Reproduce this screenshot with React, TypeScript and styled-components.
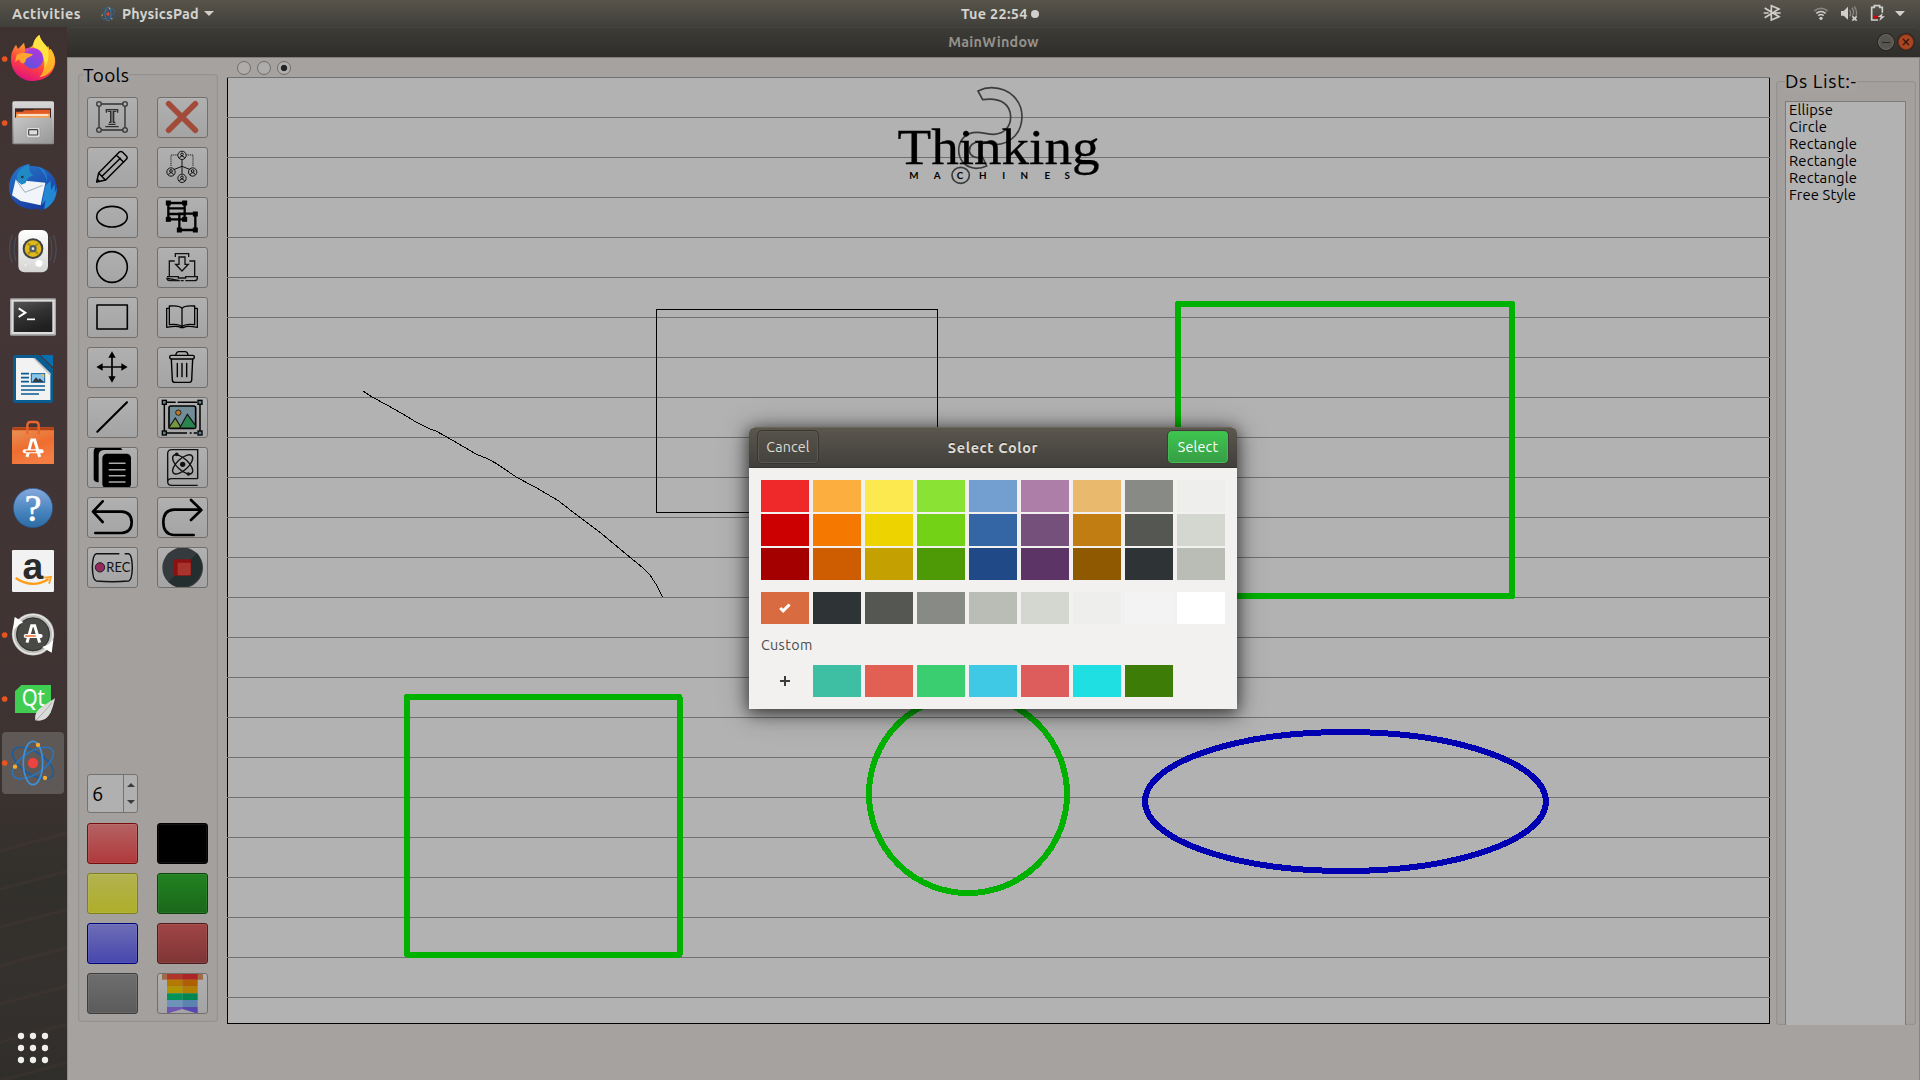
import React from "react";
import styled, { createGlobalStyle, css } from "styled-components";

const uiFont = `Ubuntu, "Noto Sans", "Open Sans", sans-serif`;

const GlobalStyle = createGlobalStyle`
  * { box-sizing: border-box; }
  html, body { margin: 0; padding: 0; overflow: hidden; }
  body { font-family: ${uiFont}; background: #a6a29f; }
  svg { display: block; }
  button { font: inherit; padding: 0; margin: 0; }
`;

/* ---------- desktop shell ---------- */

const Desktop = styled.div`
  position: relative;
  width: 1920px;
  height: 1080px;
  display: flex;
  flex-direction: column;
  overflow: hidden;
`;

const TopBar = styled.header`
  height: 27px;
  flex: none;
  display: grid;
  grid-template-columns: 961px auto 1fr;
  align-items: center;
  color: #d4d3cf;
  background: linear-gradient(#58544b, #403f3a);
`;

const TopLeft = styled.div`
  display: flex;
  align-items: center;
  padding-left: 12px;
`;

const BarText = styled.span<{ $width?: number; $spacing?: number }>`
  width: ${(p) => (p.$width ? `${p.$width}px` : "auto")};
  font-size: 14.4px;
  font-weight: 600;
  line-height: 26px;
  white-space: nowrap;
  letter-spacing: ${(p) => p.$spacing ?? 0.2}px;
`;

const AppMenu = styled.div`
  display: flex;
  align-items: center;
  margin-left: 20px;
  gap: 6px;
`;

const Caret = styled.i`
  border: 5px solid transparent;
  border-top-color: #d0cfcb;
  border-bottom: 0;
`;

const Clock = styled.div`
  display: flex;
  align-items: center;
`;

const ClockDot = styled.i`
  width: 8px;
  height: 8px;
  border-radius: 50%;
  background: #d0cfcb;
`;

const Tray = styled.div`
  display: flex;
  justify-content: flex-end;
  padding-right: 14px;
`;

const TrayIcon = styled.svg<{ $before: number }>`
  margin-left: ${(p) => p.$before}px;
`;

const Workspace = styled.div`
  flex: 1;
  display: flex;
  min-height: 0;
`;

/* ---------- dock ---------- */

const DockBar = styled.nav`
  width: 67px;
  flex: none;
  display: flex;
  flex-direction: column;
  background:
    repeating-linear-gradient(165deg, transparent 0 21px, rgba(120, 70, 60, 0.1) 22px 24px, transparent 25px 37px) 0 800px / 67px 253px no-repeat,
    linear-gradient(#3e3231 0, #443636 250px, #413434 560px, #3c3331 740px, #32302c 860px, #35312e 950px, #302e2b 100%);
`;

const DockCell = styled.div<{ $active?: boolean; $last?: boolean }>`
  width: 67px;
  height: 64px;
  flex: none;
  ${(p) => p.$last && css`margin-top: auto;`}
  ${(p) =>
    p.$active &&
    css`
      width: 62px;
      height: 62px;
      margin: 1px 2px 1px;
      border-radius: 4px;
      background: #5e5856;
      svg { margin: -1px 0 0 -2px; }
    `}
`;

/* ---------- main window ---------- */

const Window = styled.main`
  flex: 1;
  display: flex;
  flex-direction: column;
  background: #3f3e39;
`;

const TitleBar = styled.div`
  height: 30px;
  flex: none;
  display: grid;
  grid-template-columns: 1fr auto 1fr;
  align-items: center;
  padding-bottom: 2px;
  border-radius: 6px 6px 0 0;
  border-top: 1px solid #45443e;
  background: linear-gradient(#3d3c37, #2e2d29);
  color: #94918a;
`;

const WindowButtons = styled.div`
  display: flex;
  justify-content: flex-end;
  gap: 4px;
  padding: 1px 6px 0 0;
`;

const RoundButton = styled.button<{ $close?: boolean }>`
  width: 16px;
  height: 16px;
  border-radius: 50%;
  display: grid;
  place-items: center;
  border: 1px solid ${(p) => (p.$close ? "#7c3317" : "#6d6a63")};
  background: ${(p) => (p.$close ? "#aa4523" : "#57554f")};
  box-shadow: 0 0 0 1px #262521;
`;

const Client = styled.div`
  flex: 1;
  display: flex;
  align-items: flex-start;
  border: 1px solid #878380;
  border-top-color: #827e7b;
  border-bottom: 0;
  border-left-color: #8f8b88;
  background: #a6a29f;
`;

const Group = styled.section<{ $w: number; $h: number; $top: number; $left: number }>`
  width: ${(p) => p.$w}px;
  height: ${(p) => p.$h}px;
  margin: ${(p) => p.$top}px 0 0 ${(p) => p.$left}px;
  flex: none;
  display: flex;
  flex-direction: column;
  border: 1px solid #949290;
  border-radius: 3px;
  box-shadow: inset 0 0 0 1px #a09d9a;
  background: #a4a09d;
`;

const GroupTitle = styled.h2<{ $left: number; $lift: number; $spacing: number }>`
  align-self: flex-start;
  height: 24px;
  margin: -${(p) => p.$lift}px 0 ${(p) => p.$lift - 12}px ${(p) => p.$left}px;
  font-size: 19px;
  font-weight: 400;
  line-height: 24px;
  letter-spacing: ${(p) => p.$spacing}px;
  white-space: nowrap;
  color: #000;
  background: #a6a29f;
`;

const ToolGrid = styled.div<{ $top: number }>`
  display: grid;
  grid-template-columns: 51px 51px;
  grid-auto-rows: 41px;
  gap: 9px 19px;
  margin: ${(p) => p.$top}px 0 0 8px;
`;

const ToolButton = styled.button<{ $from?: string; $to?: string; $edge?: string }>`
  overflow: hidden;
  border: 1px solid ${(p) => p.$edge ?? "#716e6c"};
  border-radius: 3px;
  background: linear-gradient(${(p) => p.$from ?? "#b0b0b0"}, ${(p) => p.$to ?? "#a5a4a4"});
  box-shadow: ${(p) => (p.$from ? "inset 0 0 0 1px rgba(255,255,255,.07)" : "inset 0 1px #b4b4b4")};
  svg { margin: -1px; }
`;

const Spin = styled.div`
  width: 51px;
  height: 39px;
  flex: none;
  display: flex;
  margin: 186px 0 0 8px;
  border: 1px solid #757371;
  border-radius: 3px;
  background: #b0b0b0;
`;

const SpinValue = styled.span`
  flex: 1;
  padding-left: 4px;
  font-size: 20px;
  line-height: 37px;
  color: #000;
`;

const SpinArrows = styled.div`
  width: 14px;
  display: flex;
  flex-direction: column;
  align-items: center;
  justify-content: center;
  gap: 13px;
  border-left: 1px solid #757371;
`;

const SpinArrow = styled.i<{ $down?: boolean }>`
  border: 4px solid transparent;
  ${(p) =>
    p.$down
      ? css`border-top-color: #3c3b3a; border-bottom: 0;`
      : css`border-bottom-color: #3c3b3a; border-top: 0;`}
`;

const CanvasColumn = styled.div`
  width: 1543px;
  flex: none;
  margin-left: 9px;
`;

const Radios = styled.div`
  height: 19px;
  display: flex;
  align-items: center;
  gap: 6px;
  padding: 1px 0 0 10px;
`;

const Radio = styled.i<{ $on?: boolean }>`
  width: 14px;
  height: 14px;
  border-radius: 50%;
  border: 1px solid #6f6d6b;
  background: ${(p) => (p.$on ? "radial-gradient(circle, #242424 0 2.8px, #b1b0b0 3.6px)" : "#aeadac")};
`;

const ObjectList = styled.ul`
  flex: 1;
  width: 121px;
  margin: 7px 0 -1px 8px;
  padding: 0 0 0 3px;
  list-style: none;
  border: 1px solid #7d7a78;
  border-bottom: 0;
  background: #b2b2b2;
`;

const ObjectItem = styled.li`
  height: 17px;
  font-size: 14.8px;
  line-height: 15px;
  letter-spacing: 0.15px;
  color: #000;
`;

/* ---------- colour dialog ---------- */

const Dialog = styled.section`
  position: absolute;
  left: 749px;
  top: 427px;
  width: 488px;
  height: 282px;
  display: flex;
  flex-direction: column;
  border-radius: 6px 6px 0 0;
  background: #f2f1f0;
  box-shadow: 0 3px 16px 1px rgba(0, 0, 0, 0.62), 0 3px 32px rgba(0, 0, 0, 0.28);
`;

const DialogHeader = styled.div`
  height: 41px;
  flex: none;
  display: flex;
  align-items: center;
  justify-content: space-between;
  padding: 0 8px 1px;
  border-radius: 6px 6px 0 0;
  border-top: 1px solid #69655b;
  border-bottom: 1px solid #37352f;
  background: linear-gradient(#5b574e, #413f3b);
  color: #dfdbd2;
`;

const DialogTitle = styled.h1`
  margin: 0;
  font-size: 14.5px;
  font-weight: 600;
  letter-spacing: 0.6px;
  text-shadow: 0 -1px #2c2b27;
`;

const DialogButton = styled.button<{ $primary?: boolean }>`
  width: 62px;
  height: 34px;
  padding-top: 1px;
  font-size: 14.3px;
  line-height: 31px;
  letter-spacing: ${(p) => (p.$primary ? 0.2 : 0.15)}px;
  border-radius: 5px;
  color: ${(p) => (p.$primary ? "#fff" : "#dfdbd2")};
  border: 1px solid ${(p) => (p.$primary ? "#403c38" : "#38362f")};
  background: ${(p) => (p.$primary ? "linear-gradient(#3ec650, #379d45)" : "linear-gradient(#55524a, #45433e)")};
  box-shadow: inset 0 0 0 1px ${(p) => (p.$primary ? "#42bb51" : "#5a574f")};
`;

const Palette = styled.div<{ $top: number }>`
  display: grid;
  grid-template-columns: repeat(9, 48px);
  grid-auto-rows: 32px;
  gap: 2px 4px;
  margin: ${(p) => p.$top}px 12px 0;
`;

const Swatch = styled.div<{ $color: string }>`
  display: grid;
  place-items: center;
  background: ${(p) => p.$color};
`;

const CustomLabel = styled.div`
  height: 20px;
  margin: 11px 0 0 12px;
  font-size: 14.3px;
  line-height: 20px;
  letter-spacing: 0.4px;
  color: #4c4c4c;
`;

/* ---------- tool icons, drawn on a 153 x 123 grid ---------- */

const ink = { fill: "none", stroke: "#000", strokeWidth: 4.8, strokeLinecap: "round", strokeLinejoin: "round" } as const;

const Person = ({ x, y }: { x: number; y: number }) => (
  <g transform={`translate(${x} ${y})`} fill="none" stroke="#111" strokeWidth="3">
    <circle r="12.5" />
    <circle cy="-3" r="4" />
    <path d="M-7 8Q-6 2 0 2Q6 2 7 8" />
  </g>
);

const toolIcons: React.ReactNode[] = [
  <g fill="none" stroke="#303030" strokeWidth="4">
    <path d="M43 21H108M43 99H108M36 28V92M114 28V92" />
    {[[36, 21], [114, 21], [36, 99], [114, 99]].map(([x, y]) => (
      <rect key={`${x}-${y}`} x={x - 6.5} y={y - 6.5} width="13" height="13" rx="4" />
    ))}
    <path d="M58 47V38H92V47M62 43H71V76H66M88 43H80V76H85M64 82H86M55 89H95" />
    <path d="M75 42V77" strokeWidth="4" stroke="#555" />
  </g>,
  <path d="M35 20L115 100M115 20L35 100" stroke="#a34b3b" strokeWidth="17" strokeLinecap="round" />,
  <g {...ink} strokeWidth={4.4}>
    <path d="M29 105L35 78L97 15Q102 11 107 16L118 27Q123 32 118 37L56 99ZM35 78L55 99M88 24L110 46M45 88L100 34M31 97L37 103" />
  </g>,
  <g>
    <path d="M62 24H42V58M88 24H108V58" stroke="#111" strokeWidth="2.6" strokeDasharray="3.5 2" fill="none" />
    <path d="M75 38V80M75 58L50 68M75 58L100 68" stroke="#111" strokeWidth="3" />
    <Person x={75} y={25} />
    <Person x={42} y={75} />
    <Person x={107} y={75} />
    <Person x={75} y={94} />
  </g>,
  <ellipse {...ink} cx="75" cy="59" rx="46" ry="31" />,
  <g>
    <path d="M34 18H83V67H34ZM67 50H115V99H67ZM34 34H83M34 51H83" fill="none" stroke="#000" strokeWidth="7" />
    {[[34, 18], [83, 18], [34, 67], [83, 67], [115, 51], [67, 99], [115, 99]].map(([x, y]) => (
      <rect key={`${x}-${y}`} x={x - 7.5} y={y - 7.5} width="15" height="15" />
    ))}
  </g>,
  <circle {...ink} cx="75" cy="60" r="46" />,
  <g fill="none" stroke="#111" strokeWidth="4">
    <path d="M55 30V20H95V30M53 42H37V88M97 42H113V88M66 30H84V52H94L75 72L56 52H66ZM30 89H64V93H86V89H121V94Q120 101 113 101H85M68 101H38Q30 101 30 94ZM71 101H80" />
  </g>,
  <rect {...ink} x="30" y="24" width="91" height="72" />,
  <g {...ink} strokeWidth={3.8}>
    <path d="M75 34Q67 24 37 27V83Q67 80 75 90Q83 80 113 83V27Q83 24 75 34V88M37 34H29V91Q62 85 72 92H79Q88 85 121 91V34H114" />
  </g>,
  <g>
    <path d="M35 60H116M75 20V100" stroke="#000" strokeWidth="5" />
    <path d="M28 60L47 49V71ZM122 60L103 49V71ZM75 13L64 32H86ZM75 107L64 88H86Z" />
  </g>,
  <g {...ink} strokeWidth={4.2}>
    <path d="M43 37L46 100Q47 106 54 106H97Q103 106 104 100L107 37M56 25Q58 14 66 14H84Q92 14 93 25M61 49V89M75 49V89M89 49V89" />
    <rect x="38" y="25" width="74" height="11" rx="5" />
  </g>,
  <path d="M31 104L120 16" stroke="#000" strokeWidth="6.5" strokeLinecap="round" />,
  <g>
    <rect x="36" y="27" width="80" height="67" fill="#728d97" stroke="#000" strokeWidth="5" rx="6" />
    <circle cx="64" cy="47" r="8" fill="#bd7926" stroke="#222" strokeWidth="3" />
    <path d="M35 93L55 63L73 93Z" fill="#73983e" stroke="#111" strokeWidth="3.5" />
    <path d="M68 93L91 52L116 86V93Z" fill="#2b844c" stroke="#111" strokeWidth="3.5" />
    <path d="M30 16H56M62 16H120M30 108H90M98 108H104M110 108H120M22 24V104M129 24V104" stroke="#000" strokeWidth="4.5" />
    {[[22, 16], [129, 16], [22, 108], [129, 108]].map(([x, y]) => (
      <rect key={`${x}-${y}`} x={x - 6} y={y - 6} width="12" height="12" fill="#607f8c" stroke="#000" strokeWidth="4" />
    ))}
  </g>,
  <g>
    <path d="M31 106Q20 103 20 95V14Q20 0 34 0H96Q104 3 106 9H50Q35 10 35 24V106Z" />
    <rect x="46" y="20" width="86" height="104" rx="13" />
    <path d="M67 49H114M67 68H114M67 86H114M67 105H114" stroke="#aaa" strokeWidth="4.5" strokeLinecap="round" />
  </g>,
  <g fill="none" stroke="#111" strokeWidth="4.2">
    <path d="M122 85V8H45Q32 8 32 20V104M122 95H44Q32 95 32 105Q33 115 44 115H122M122 85V95" />
    <ellipse cx="77" cy="52" rx="38" ry="17" transform="rotate(43 77 52)" />
    <ellipse cx="77" cy="52" rx="38" ry="17" transform="rotate(-43 77 52)" />
    <g fill="#111" stroke="none">
      <circle cx="77" cy="52" r="8" />
      <circle cx="59" cy="22" r="5.5" />
      <circle cx="94" cy="81" r="5.5" />
    </g>
  </g>,
  <path d="M25 108H104Q134 106 134 76Q134 46 104 44H20M47 13L18 44L47 75" fill="none" stroke="#000" strokeWidth="8" strokeLinecap="round" strokeLinejoin="round" />,
  <path d="M110 114H50Q19 112 19 76Q19 40 50 38H131M102 9L133 39L102 69" fill="none" stroke="#000" strokeWidth="8" strokeLinecap="round" strokeLinejoin="round" />,
  <g>
    <path d="M97 20H28Q17 22 16 61Q17 100 28 102Q75 106 125 102Q135 100 136 61Q135 22 125 20H113" fill="none" stroke="#111" strokeWidth="4.4" />
    <circle cx="39" cy="61" r="14" fill="#922a5e" stroke="#222" strokeWidth="3" />
    <text x="58" y="75" fontSize="41" textLength="72" lengthAdjust="spacingAndGlyphs" fontFamily="Lato, sans-serif" fill="#111">REC</text>
  </g>,
  <g>
    <circle cx="77" cy="62" r="61" fill="#353a3e" />
    <path d="M120 19A61 61 0 0 1 34 105Z" fill="#232e2e" />
    <rect x="51" y="37" width="51" height="49" rx="3" fill="#8d1110" />
    <rect x="62" y="47" width="39" height="38" rx="3" fill="#a7352d" />
  </g>,
];

const colorButtons = [
  ["#b46263", "#b0393b", "#760d0f"],
  ["#000", "#000", "#000"],
  ["#b2b250", "#aeae2a", "#80801a"],
  ["#218221", "#1a681a", "#0c420c"],
  ["#6d6db6", "#4747ae", "#00007a"],
  ["#a04546", "#7f3535", "#4e1c1c"],
  ["#6e6e6e", "#5b5b5b", "#3d3d3d"],
];

const Glyph = ({ children }: { children: React.ReactNode }) => (
  <svg width="51" height="41" viewBox="0 0 153 123">{children}</svg>
);

const RainbowFlag = () => (
  <Glyph>
    <path d="M15 0H138V20H15Z" fill="#9e6b45" />
    {[["#b0362c", "#ad2427", 0, 20], ["#b47a00", "#ae5f00", 20, 21], ["#ad9600", "#b07f00", 41, 20], ["#009259", "#008650", 61, 20], ["#6d93b8", "#5c83b0", 81, 21]].map(
      ([a, b, y, h]) => (
        <g key={y as number}>
          <rect x="30" y={y} width="46" height={h} fill={a as string} />
          <rect x="76" y={y} width="46" height={h} fill={b as string} />
        </g>
      ),
    )}
    <path d="M30 102H76V108L30 122Z" fill="#6f54b2" />
    <path d="M76 102H122V122L76 108Z" fill="#5845b0" />
  </Glyph>
);

/* ---------- dock icons, drawn on a 201 x 192 grid ---------- */

const Atom = ({ cx, cy, s = 1 }: { cx: number; cy: number; s?: number }) => (
  <g transform={`translate(${cx} ${cy}) scale(${s})`} fill="none" strokeWidth="5">
    <ellipse rx="70" ry="33" transform="rotate(33)" stroke="#1d5d9b" />
    <ellipse rx="70" ry="33" transform="rotate(-33)" stroke="#2a74b9" />
    <ellipse rx="29" ry="65" stroke="#3c92dd" />
    <g fill="#fbab2b">
      <circle r="15.5" fill="#eb4340" />
      <circle cx="15" cy="-54" r="6.5" />
      <circle cx="-54" cy="11" r="6.5" />
      <circle cx="36" cy="45" r="6.5" />
    </g>
  </g>
);

const dockItems: { name: string; running?: boolean; art: React.ReactNode }[] = [
  {
    name: "Firefox",
    running: true,
    art: (
      <g>
        <path d="M33 98C32 76 42 62 48 53L54 66L72 47L76 66C88 64 96 60 100 51C102 40 109 31 118 24C122 42 134 50 142 62L144 57L149 70L152 66C162 78 168 97 165 112C160 142 133 162 99 162C62 162 34 134 33 98Z" fill="url(#fx)" />
        <path d="M118 24C122 42 134 50 142 62L144 57L149 70L152 66C164 82 168 103 160 121C152 136 138 148 118 151C137 132 138 92 122 74C108 68 100 62 100 51C102 40 109 31 118 24Z" fill="#ffc226" opacity=".85" />
        <path d="M118 24C122 42 134 50 142 62C150 84 144 108 134 121C136 94 121 69 100 60C100 42 109 31 118 24Z" fill="#fff04d" opacity=".75" />
        <circle cx="99" cy="94" r="31" fill="url(#globe)" />
        <path d="M50 83C64 75 82 78 99 82C93 91 83 90 78 97C76 113 62 114 57 97L45 105Z" fill="#ffa52e" />
        <path d="M74 66Q88 61 102 63Q88 66 83 76Q76 75 74 66Z" fill="#c846c0" />
      </g>
    ),
  },
  {
    name: "Files",
    running: true,
    art: (
      <g>
        <rect x="37" y="31" width="125" height="129" rx="5" fill="url(#steel)" />
        <rect x="45" y="52" width="108" height="32" fill="#3d2421" />
        <path d="M48 62H68L73 58H98L102 56H150V84H48Z" fill="#e35b25" />
        <path d="M48 68H150V84H48Z" fill="#f5a153" />
        <path d="M54 70H145V74H54Z" fill="#fff" />
        <rect x="42" y="80" width="114" height="76" fill="url(#steel2)" />
        <rect x="79" y="109" width="41" height="31" rx="6" fill="#ddd" stroke="#999" strokeWidth="2" />
        <rect x="86" y="116" width="27" height="16" rx="2" fill="#ddd" stroke="#444" strokeWidth="3.5" />
      </g>
    ),
  },
  {
    name: "Thunderbird",
    art: (
      <g>
        <path d="M29 112C21 75 45 33 83 28L91 26L87 33C133 29 171 60 171 101C171 132 152 160 119 167L122 160L104 163C68 164 36 146 29 112Z" fill="url(#tb)" />
        <path d="M112 34C140 44 148 69 135 96L125 151L137 136L132 163C159 150 171 126 170 98L164 113L165 87L153 105L152 77L139 90Q144 57 112 34Z" fill="#2388d2" />
        <path d="M36 121L47 73L58 84L77 77L136 83L122 151L62 138Z" fill="#f1f4f8" />
        <path d="M48 75L75 112L128 91" fill="none" stroke="#8fa0b1" strokeWidth="2.5" />
        <path d="M51 76Q46 46 83 29L89 32Q82 49 100 61Q79 67 77 84L64 89Z" fill="#208ac7" />
        <circle cx="67" cy="66" r="4" fill="#26343d" />
      </g>
    ),
  },
  {
    name: "Rhythmbox",
    art: (
      <g>
        <path d="M37 48Q20 90 37 132M160 48Q177 90 160 132M48 54Q37 90 48 126M150 54Q161 90 150 126" fill="none" stroke="#52687b" strokeWidth="4" opacity=".45" />
        <rect x="55" y="33" width="89" height="127" rx="18" fill="url(#white)" />
        <circle cx="99" cy="89" r="31" fill="#3e4244" />
        <circle cx="99" cy="89" r="25" fill="#e0b919" />
        <path d="M84 73L114 105M114 73L84 105" stroke="#a88f17" strokeWidth="6" />
        <circle cx="99" cy="89" r="11" fill="#555e67" />
        <circle cx="99" cy="89" r="4" fill="#e9e9dc" />
        <circle cx="117" cy="133" r="11" fill="#fff" stroke="#ddd" />
        <circle cx="77" cy="138" r="6" fill="#e8e8e8" stroke="#ccc" />
      </g>
    ),
  },
  {
    name: "Terminal",
    art: (
      <g>
        <rect x="30" y="46" width="138" height="112" rx="4" fill="#a6a6a6" />
        <rect x="34" y="50" width="130" height="103" rx="2" fill="#ddd" />
        <rect x="41" y="56" width="116" height="91" fill="url(#term)" />
        <path d="M56 76L76 89L56 102" fill="none" stroke="#fff" strokeWidth="6" />
        <path d="M81 109H105" stroke="#fff" strokeWidth="5" />
      </g>
    ),
  },
  {
    name: "Writer",
    art: (
      <g>
        <path d="M46 24H118L159 65V162Q159 168 152 168H46Q39 168 39 162V31Q39 24 46 24Z" fill="#0b5c91" />
        <path d="M122 24H155Q159 24 159 28V60Z" fill="#0870b2" />
        <path d="M48 33H104L151 79V159H48Z" fill="#f2f2f2" />
        <path d="M104 33L151 79V86L98 33Z" fill="#c7c7c7" />
        <path d="M63 80H87M63 92H87M63 104H87M63 117H135M63 129H135M63 141H117" stroke="#0d5b91" strokeWidth="5" />
        <rect x="94" y="80" width="40" height="26" fill="#8cc5ec" stroke="#126095" strokeWidth="3" />
        <path d="M97 105L108 91L115 98L119 94L132 105Z" fill="#303c49" />
        <path d="M122 82H133V93Z" fill="#e7c34a" />
      </g>
    ),
  },
  {
    name: "Software",
    art: (
      <g>
        <path d="M36 58L39 49H160L162 58V159H36Z" fill="url(#bag)" />
        <path d="M36 58L39 49H160L162 58Z" fill="#b34116" />
        <path d="M82 70V43Q83 33 91 33H108Q116 34 116 43V70" fill="none" stroke="#ed652e" strokeWidth="7" />
        <g fill="none" stroke="#fff" strokeWidth="9">
          <path d="M81 138L95 87H104L119 138" />
          <path d="M74 121H125" strokeWidth="12" strokeLinecap="round" />
        </g>
        <path d="M79 121H106" stroke="#ee6b2f" strokeWidth="5" strokeLinecap="round" />
      </g>
    ),
  },
  {
    name: "Help",
    art: (
      <g>
        <circle cx="99" cy="99" r="59" fill="url(#help)" stroke="#26558b" strokeWidth="2" />
        <text x="99" y="137" textAnchor="middle" fontSize="112" fontFamily="Liberation Serif, serif" fill="#fff" stroke="#fff" strokeWidth="2">?</text>
      </g>
    ),
  },
  {
    name: "Amazon",
    art: (
      <g>
        <rect x="36" y="33" width="126" height="126" rx="4" fill="#f2f2f2" />
        <text x="99" y="119" textAnchor="middle" fontSize="112" fontWeight="700" fontFamily="Liberation Sans, sans-serif" fill="#2b2b2b">a</text>
        <path d="M47 117Q98 151 146 120" fill="none" stroke="#ff9d16" strokeWidth="7" />
        <path d="M133 116L153 114L147 134" fill="none" stroke="#ff9d16" strokeWidth="5" />
      </g>
    ),
  },
  {
    name: "Updater",
    running: true,
    art: (
      <g>
        <circle cx="99" cy="94" r="57" fill="#494a45" stroke="#bdbdbb" strokeWidth="13" />
        <circle cx="99" cy="94" r="59" fill="none" stroke="#e8e8e8" strokeWidth="4" />
        <circle cx="99" cy="94" r="49" fill="none" stroke="#323330" strokeWidth="3" />
        <path d="M39 78L44 42L70 58L56 65L43 79ZM160 111L155 149L126 132L144 125Z" fill="#fff" />
        <g fill="none" stroke="#fff" strokeWidth="9">
          <path d="M81 119L95 68H104L119 119" />
          <path d="M77 99H122" strokeWidth="12" strokeLinecap="round" />
        </g>
        <path d="M77 99H106" stroke="#ee6b2f" strokeWidth="5" strokeLinecap="round" />
      </g>
    ),
  },
  {
    name: "Qt",
    running: true,
    art: (
      <g>
        <path d="M64 54H153V138H45V73Z" fill="#41cd52" />
        <text x="65" y="118" fontSize="68" textLength="70" lengthAdjust="spacingAndGlyphs" fontFamily="Noto Sans, sans-serif" fill="#fff">Qt</text>
        <path d="M106 160C102 128 126 121 165 94C157 129 148 162 115 161L107 160Z" fill="#dadada" />
        <path d="M108 160C125 142 141 126 155 107" fill="none" stroke="#919191" strokeWidth="2" />
      </g>
    ),
  },
];

const Running = () => <circle cx="14" cy="96" r="8.5" fill="#e95420" />;

const DockDefs = () => (
  <svg width="0" height="0">
    <defs>
      <linearGradient id="fx" x1="0.8" y1="0" x2="0.4" y2="1">
        <stop offset="0" stopColor="#ffe14a" /><stop offset=".35" stopColor="#ff9b2a" /><stop offset=".7" stopColor="#ff3e45" /><stop offset="1" stopColor="#e0157c" />
      </linearGradient>
      <linearGradient id="globe" x1="0.8" y1="0" x2="0.3" y2="1">
        <stop offset="0" stopColor="#b833dd" /><stop offset="1" stopColor="#5b55dd" />
      </linearGradient>
      <linearGradient id="steel" x2="0" y2="1"><stop offset="0" stopColor="#dadada" /><stop offset="1" stopColor="#8b8b8b" /></linearGradient>
      <linearGradient id="steel2" x2="1" y2="1"><stop offset="0" stopColor="#c6c6c6" /><stop offset="1" stopColor="#989898" /></linearGradient>
      <linearGradient id="tb" x2="0.5" y2="1"><stop offset="0" stopColor="#2877c7" /><stop offset="1" stopColor="#173da5" /></linearGradient>
      <linearGradient id="white" x2="0" y2="1"><stop offset="0" stopColor="#fff" /><stop offset="1" stopColor="#d4d4d2" /></linearGradient>
      <linearGradient id="term" x2="0.4" y2="1"><stop offset="0" stopColor="#555" /><stop offset=".5" stopColor="#333" /><stop offset="1" stopColor="#202020" /></linearGradient>
      <linearGradient id="bag" x2="0.4" y2="1"><stop offset="0" stopColor="#e79559" /><stop offset=".6" stopColor="#ee6d2f" /><stop offset="1" stopColor="#f37d43" /></linearGradient>
      <linearGradient id="help" x2="0" y2="1"><stop offset="0" stopColor="#86a9dd" /><stop offset=".6" stopColor="#4683bd" /><stop offset="1" stopColor="#2c6ba3" /></linearGradient>
    </defs>
  </svg>
);

const Dock = () => (
  <DockBar>
    {dockItems.map((item) => (
      <DockCell key={item.name}>
        <svg width="67" height="64" viewBox="0 0 201 192" aria-label={item.name}>
          {item.running && <Running />}
          {item.art}
        </svg>
      </DockCell>
    ))}
    <DockCell $active>
      <svg width="67" height="64" viewBox="0 0 201 192" aria-label="PhysicsPad">
        <Running />
        <Atom cx={99} cy={96} />
      </svg>
    </DockCell>
    <DockCell $last>
      <svg width="67" height="64" viewBox="0 0 201 192" fill="#f0efee">
        {[60, 96, 132].flatMap((y) => [63, 99, 135].map((x) => <circle key={`${x}-${y}`} cx={x} cy={y} r="9.5" />))}
      </svg>
    </DockCell>
    <DockDefs />
  </DockBar>
);

/* ---------- drawing surface ---------- */

const ruleLines = Array.from({ length: 24 }, (_, i) => 77.5 + i * 40);

const stroke = [
  [70, 64], [98, 82], [150, 110], [190, 133], [228, 156], [265, 175], [290, 184], [322, 202], [360, 224], [410, 253], [440, 265],
  [470, 281], [530, 322], [590, 354], [655, 392], [718, 441], [780, 487], [870, 562], [900, 586], [930, 615], [950, 646], [967, 681],
].map(([x, y]) => `${340 + x / 3},${370 + y / 3}`).join(" ");

const Sheet = () => (
  <svg width="1543" height="947" viewBox="227 77 1543 947" fill="none">
    <rect x="227" y="77" width="1543" height="947" fill="#b2b2b2" />
    <g shapeRendering="crispEdges">
      <path d="M227.5 77V1023.5H1769.5V77" stroke="#000" />
      {ruleLines.map((y) => <path key={y} d={`M227 ${y}H1770`} stroke="#707070" />)}
      <rect x="656.5" y="309.5" width="281" height="203" stroke="#000" />
      <polyline points={stroke} stroke="#000" />
      <g strokeWidth="6" strokeLinejoin="round">
        <rect x="1178" y="304" width="334" height="292" stroke="#00b200" />
        <rect x="407" y="697" width="272.5" height="257.5" stroke="#00b200" />
        <ellipse cx="968" cy="794" rx="99" ry="99" stroke="#00b200" />
        <ellipse cx="1345.5" cy="801.5" rx="200.5" ry="69.5" stroke="#0000b2" />
      </g>
    </g>
    <g transform="translate(860 0) scale(.33333)" stroke="#3c3c3c" strokeWidth="5">
      <path d="M354 273Q374 263 395 263C452 264 486 305 486 350C485 397 455 432 405 434C390 431 375 424 360 425C338 427 328 437 328 452C330 470 350 477 367 470L380 498Q366 505 348 505C316 503 296 480 296 450C297 419 318 397 350 397C370 397 382 403 402 403C433 401 452 380 452 350C451 317 427 291 368 299Z" />
      <ellipse cx="302" cy="526" rx="26" ry="24" />
    </g>
    <text x="897.5" y="164" fontSize="50" textLength="202" lengthAdjust="spacingAndGlyphs" fontFamily="Liberation Serif, serif" fill="#000" stroke="#000" strokeWidth=".3">Thinking</text>
    <text x="909.3 933.7 956.8 979 1002.3 1020.5 1044.5 1064.5" y="179" fontSize="9.8" fontWeight="700" fontFamily="Lato, sans-serif" fill="#000">MACHINES</text>
  </svg>
);

/* ---------- data ---------- */

const objects = ["Ellipse", "Circle", "Rectangle", "Rectangle", "Rectangle", "Free Style"];

const palette = [
  "#ef2929", "#fcaf3e", "#fce94f", "#8ae234", "#729fcf", "#ad7fa8", "#e9b96e", "#888a85", "#eeeeec",
  "#cc0000", "#f57900", "#edd400", "#73d216", "#3465a4", "#75507b", "#c17d11", "#555753", "#d3d7cf",
  "#a40000", "#ce5c00", "#c4a000", "#4e9a06", "#204a87", "#5c3566", "#8f5902", "#2e3436", "#babdb6",
];
const greys = ["#2e3436", "#555753", "#888a85", "#babdb6", "#d3d7cf", "#eeeeec", "#f3f3f3", "#ffffff"];
const custom = ["#3ebea3", "#e15f53", "#3bce70", "#3fc9e4", "#dd5c5c", "#20dfe2", "#3d7c06"];

export default function App() {
  return (
    <Desktop>
      <GlobalStyle />
      <TopBar>
        <TopLeft>
          <BarText $width={68} $spacing={0.5}>Activities</BarText>
          <AppMenu>
            <svg width="16" height="16" viewBox="0 0 150 150"><Atom cx={75} cy={75} /></svg>
            <BarText $width={76}>PhysicsPad</BarText>
            <Caret />
          </AppMenu>
        </TopLeft>
        <Clock>
          <BarText $width={70} $spacing={0.3}>Tue 22:54</BarText>
          <ClockDot />
        </Clock>
        <Tray>
          <TrayIcon $before={0} width="20" height="27" viewBox="126 0 60 81" fill="none" stroke="#d0cfcb" strokeWidth="5">
            <path d="M134 24L177 50L154 60V17L177 27L134 53M131 39H146M164 39H182" />
          </TrayIcon>
          <TrayIcon $before={31} width="16" height="27" viewBox="279 0 48 81" fill="none" stroke="#d0cfcb" strokeWidth="5">
            <path d="M283 33Q303 17 323 33" stroke="#85837c" />
            <path d="M289 40Q303 29 317 40M295 47Q303 40 311 47" />
            <circle cx="303" cy="55" r="5" fill="#d0cfcb" stroke="none" />
          </TrayIcon>
          <TrayIcon $before={11} width="18" height="27" viewBox="360 0 54 81" fill="none">
            <path d="M363 33H371L384 20V59L371 47H363Z" fill="#d0cfcb" />
            <path d="M389 30Q395 39 389 49M396 23Q406 38 396 47M403 19Q413 34 408 47" stroke="#8b8982" strokeWidth="4" />
            <path d="M397 49L410 62M410 49L397 62" stroke="#d0cfcb" strokeWidth="5" />
          </TrayIcon>
          <TrayIcon $before={12} width="16" height="27" viewBox="450 0 48 81" fill="none">
            <path d="M474 60H455V22H463V17H479V22H487V38" stroke="#d0cfcb" strokeWidth="5" />
            <path d="M460 47H475V55H460Z" fill="#d40000" />
            <path d="M488 40L473 51H482L478 63L495 49H486Z" fill="#d0cfcb" />
          </TrayIcon>
          <TrayIcon $before={8} width="12" height="27" viewBox="522 0 36 81">
            <path d="M525 33H555L540 49Z" fill="#d0cfcb" />
          </TrayIcon>
        </Tray>
      </TopBar>

      <Workspace>
        <Dock />
        <Window>
          <TitleBar>
            <i />
            <BarText $spacing={0.25}>MainWindow</BarText>
            <WindowButtons>
              <RoundButton>
                <svg width="8" height="8" viewBox="0 0 8 8" stroke="#272622"><path d="M0 4.5H8" /></svg>
              </RoundButton>
              <RoundButton $close>
                <svg width="8" height="8" viewBox="0 0 8 8" stroke="#2f140b" strokeWidth="1.3"><path d="M1 1L7 7M7 1L1 7" /></svg>
              </RoundButton>
            </WindowButtons>
          </TitleBar>
          <Client>
            <Group $w={140} $h={948} $top={16} $left={10}>
              <GroupTitle $left={4} $lift={12} $spacing={0.2}>Tools</GroupTitle>
              <ToolGrid $top={10}>
                {toolIcons.map((icon, i) => (
                  <ToolButton key={i}><Glyph>{icon}</Glyph></ToolButton>
                ))}
              </ToolGrid>
              <Spin>
                <SpinValue>6</SpinValue>
                <SpinArrows><SpinArrow /><SpinArrow $down /></SpinArrows>
              </Spin>
              <ToolGrid $top={10}>
                {colorButtons.map(([from, to, edge]) => (
                  <ToolButton key={from} $from={from} $to={to} $edge={edge} />
                ))}
                <ToolButton><RainbowFlag /></ToolButton>
              </ToolGrid>
            </Group>
            <CanvasColumn>
              <Radios><Radio /><Radio /><Radio $on /></Radios>
              <Sheet />
            </CanvasColumn>
            <Group $w={140} $h={944} $top={23} $left={6}>
              <GroupTitle $left={8} $lift={13} $spacing={0.6}>Ds List:-</GroupTitle>
              <ObjectList>
                {objects.map((name, i) => <ObjectItem key={i}>{name}</ObjectItem>)}
              </ObjectList>
            </Group>
          </Client>
        </Window>
      </Workspace>

      <Dialog>
        <DialogHeader>
          <DialogButton>Cancel</DialogButton>
          <DialogTitle>Select Color</DialogTitle>
          <DialogButton $primary>Select</DialogButton>
        </DialogHeader>
        <Palette $top={12}>
          {palette.map((c) => <Swatch key={c} $color={c} />)}
        </Palette>
        <Palette $top={12}>
          <Swatch $color="#d96b40">
            <svg width="12" height="10" viewBox="0 0 12 10" fill="none" stroke="#fff" strokeWidth="3"><path d="M1.2 5L4.2 7.8L10.6 1.5" /></svg>
          </Swatch>
          {greys.map((c) => <Swatch key={c} $color={c} />)}
        </Palette>
        <CustomLabel>Custom</CustomLabel>
        <Palette $top={10}>
          <Swatch $color="transparent">
            <svg width="10" height="10" viewBox="0 0 10 10" stroke="#3c3c3c" strokeWidth="2"><path d="M0 5H10M5 0V10" /></svg>
          </Swatch>
          {custom.map((c) => <Swatch key={c} $color={c} />)}
        </Palette>
      </Dialog>
    </Desktop>
  );
}
